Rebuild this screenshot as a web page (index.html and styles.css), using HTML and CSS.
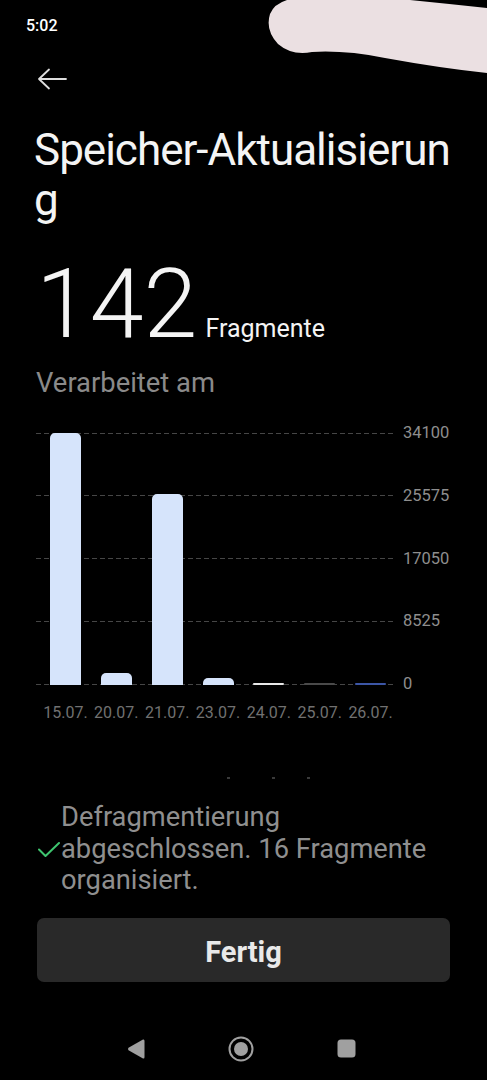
FILE: index.html
```html
<!DOCTYPE html>
<html lang="de">
<head>
<meta charset="utf-8">
<title>Speicher-Aktualisierung</title>
<link rel="stylesheet" href="styles.css">
</head>
<body>
<div class="screen">
  <svg class="scribble" width="220" height="74" viewBox="267 0 220 74" aria-hidden="true">
    <path d="M287 0 L410 0 Q450 4 487 8 L487 73 Q440 68 385 58 Q345 50 312 52 Q292 56 278 44 Q265 30 270 14 Q274 4 287 0 Z" fill="#ebe0e2"/>
  </svg>
  <div class="status">5:02</div>
  <main class="main">
    <svg class="back" width="30" height="22" viewBox="0 0 30 22" aria-hidden="true">
      <path d="M29 11 H2 M12 1.5 L2 11 L12 20.5" fill="none" stroke="#dedede" stroke-width="1.8" stroke-linecap="round" stroke-linejoin="round"/>
    </svg>
    <h1 class="title">Speicher-Aktualisierung</h1>
    <div class="count">
      <span class="count-num">142</span>
      <span class="count-unit">Fragmente</span>
    </div>
    <div class="subtitle">Verarbeitet am</div>

    <div class="chart">
      <div class="grid">
        <div class="grid-row"><div class="grid-line"></div><span class="y-label">34100</span></div>
        <div class="grid-row"><div class="grid-line"></div><span class="y-label">25575</span></div>
        <div class="grid-row"><div class="grid-line"></div><span class="y-label">17050</span></div>
        <div class="grid-row"><div class="grid-line"></div><span class="y-label">8525</span></div>
        <div class="grid-row"><div class="grid-line"></div><span class="y-label">0</span></div>
      </div>
      <div class="bars">
        <div class="bar-cell"><div class="bar" style="height:100%"></div></div>
        <div class="bar-cell"><div class="bar" style="height:4.6%"></div></div>
        <div class="bar-cell"><div class="bar" style="height:75.7%"></div></div>
        <div class="bar-cell"><div class="bar" style="height:2.6%"></div></div>
        <div class="bar-cell"><div class="bar bar-white" style="height:0.8%"></div></div>
        <div class="bar-cell"><div class="bar bar-gray" style="height:0.6%"></div></div>
        <div class="bar-cell"><div class="bar bar-blue" style="height:0.6%"></div></div>
      </div>
    </div>
    <div class="x-labels">
      <span>15.07.</span><span>20.07.</span><span>21.07.</span><span>23.07.</span><span>24.07.</span><span>25.07.</span><span>26.07.</span>
    </div>
    <div class="dots"><span class="d1"></span><span class="d2"></span><span class="d3"></span></div>

    <div class="message">
      <svg class="check" width="22" height="15" viewBox="0 0 22 15" aria-hidden="true">
        <path d="M1 7.5 L7.5 14 L21 1" fill="none" stroke="#3ec46f" stroke-width="2" stroke-linecap="round" stroke-linejoin="round"/>
      </svg>
      <p class="message-text">Defragmentierung abgeschlossen. 16 Fragmente organisiert.</p>
    </div>

    <button class="done">Fertig</button>
  </main>
  <nav class="navbar">
    <svg width="18" height="22" viewBox="0 0 18 22" aria-hidden="true"><path d="M16 1.5 Q17.5 1 17.5 3 L17.5 19 Q17.5 21 16 20.5 L1.5 12.2 Q0.5 11 1.5 9.8 Z" fill="#a0a0a0"/></svg>
    <svg width="26" height="26" viewBox="0 0 26 26" aria-hidden="true"><circle cx="13" cy="13" r="11.5" fill="none" stroke="#a0a0a0" stroke-width="2"/><circle cx="13" cy="13" r="7" fill="#a0a0a0"/></svg>
    <svg width="19" height="19" viewBox="0 0 19 19" aria-hidden="true"><rect x="0.5" y="0.5" width="18" height="18" rx="3.5" fill="#a0a0a0"/></svg>
  </nav>
</div>
</body>
</html>
```

FILE: styles.css
```css
* { box-sizing: border-box; }

html, body {
  margin: 0;
  padding: 0;
  background: #000;
}

body {
  font-family: Roboto, "Noto Sans", "Liberation Sans", sans-serif;
  color: #f2f2f2;
}

.screen {
  position: relative;
  width: 487px;
  height: 1080px;
  overflow: hidden;
  background: #000;
}

.scribble {
  position: absolute;
  top: 0;
  right: 0;
}

.status {
  height: 44px;
  padding: 16px 0 0 26px;
  font-size: 16px;
  line-height: 20px;
  font-weight: 500;
  color: #fff;
}

.main {
  padding: 0 37px 0 36px;
}

.back {
  display: block;
  margin: 24px 0 0 1px;
}

.title {
  margin: 35px 0 0 -2px;
  width: 416px;
  font-size: 44px;
  line-height: 50px;
  font-weight: 400;
  letter-spacing: -1px;
  word-break: break-all;
  color: #f4f4f4;
}

.count {
  display: flex;
  align-items: baseline;
  margin-top: 31px;
}

.count-num {
  font-size: 97px;
  line-height: 96px;
  font-weight: 300;
  color: #f4f4f4;
}

.count-unit {
  margin-left: 8px;
  font-size: 25px;
  line-height: 28px;
  color: #f4f4f4;
}

.subtitle {
  margin-top: 15px;
  font-size: 27.4px;
  line-height: 32px;
  color: #8a8a8a;
}

.chart {
  position: relative;
  margin-top: 22px;
}

.grid {
  display: flex;
  flex-direction: column;
  gap: 38.75px;
}

.grid-row {
  display: flex;
  align-items: center;
  height: 24px;
}

.grid-line {
  flex: 1;
  height: 1px;
  background-image: linear-gradient(to right, #464646 62%, transparent 0);
  background-size: 8px 1px;
}

.y-label {
  width: 47px;
  margin-left: 10px;
  font-size: 16.5px;
  line-height: 20px;
  color: #8e8e8e;
}

.bars {
  position: absolute;
  left: 4px;
  top: 12px;
  width: 356px;
  height: 251.5px;
  display: flex;
  align-items: flex-end;
}

.bar-cell {
  flex: 1;
  height: 100%;
  display: flex;
  align-items: flex-end;
  justify-content: center;
}

.bar {
  width: 31px;
  min-height: 1.5px;
  background: #d6e4fb;
  border-radius: 5px 5px 0 0;
}

.bar-white { background: #e8e8e8; border-radius: 1px; }
.bar-gray { background: #4a4a4a; border-radius: 1px; }
.bar-blue { background: #3c56a6; border-radius: 1px; }

.x-labels {
  display: flex;
  width: 356px;
  margin: 7px 0 0 4px;
}

.x-labels span {
  flex: 1;
  text-align: center;
  font-size: 16px;
  line-height: 20px;
  color: #717171;
  white-space: nowrap;
}

.dots {
  position: relative;
  height: 2px;
  margin-top: 54px;
}

.dots span {
  position: absolute;
  top: 0;
  width: 3px;
  height: 2px;
  background: #3a3a3a;
}

.dots .d1 { left: 191px; }
.dots .d2 { left: 236px; }
.dots .d3 { left: 271px; }

.message {
  display: flex;
  align-items: center;
  margin-top: 23px;
}

.check {
  flex: none;
  margin: 0 1px 0 2px;
}

.message-text {
  margin: 0;
  flex: 1;
  font-size: 27.3px;
  line-height: 31.5px;
  color: #8f8f8f;
}

.done {
  display: flex;
  align-items: center;
  justify-content: center;
  width: 413px;
  height: 64px;
  margin: 21px 0 0 1px;
  padding: 4px 0 0;
  border: none;
  border-radius: 7px;
  background: #292929;
  font-family: Roboto, "Noto Sans", sans-serif;
  font-size: 29px;
  font-weight: 700;
  color: #e9e9e9;
}

.navbar {
  display: flex;
  align-items: center;
  justify-content: center;
  gap: 83px;
  height: 48px;
  margin-top: 43px;
  padding-right: 4px;
}

.navbar svg { display: block; }
```
